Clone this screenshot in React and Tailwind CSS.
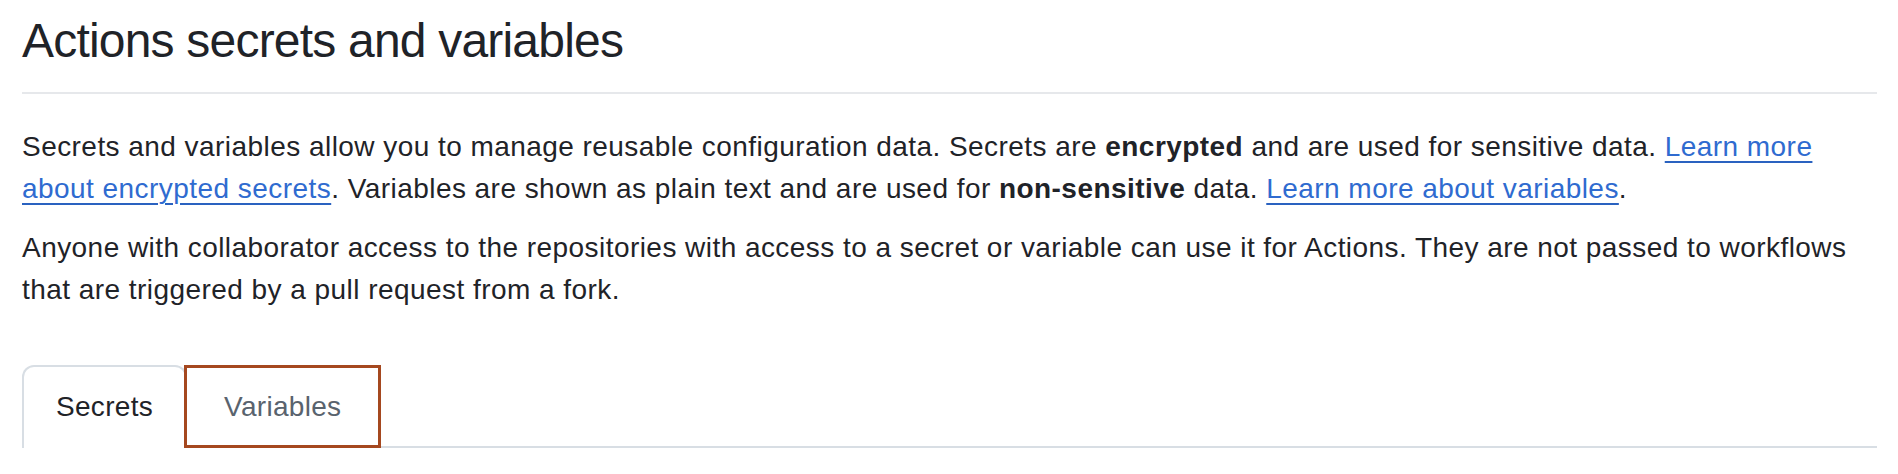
export default function App() {
  return (
    <div
      className="min-h-[474px] bg-white text-[#1f2328] pl-[22px] pr-[21px]"
      style={{ fontFamily: '"Liberation Sans", Arial, sans-serif' }}
    >
      <div className="pt-[5px] pb-[15px] border-b-2 border-[#e6e8eb]">
        <h2 className="text-[48px] leading-[72px] font-normal tracking-[-0.8px]">Actions secrets and variables</h2>
      </div>

      <div className="mt-[32px] text-[28px] leading-[42px] tracking-[0.45px]">
        <p className="mb-[17px]">
          Secrets and variables allow you to manage reusable configuration data. Secrets are{' '}
          <strong className="font-bold">encrypted</strong> and are used for sensitive data.{' '}
          <a href="#" className="text-[#2f6bd0] underline decoration-2 underline-offset-[5px] decoration-[#2a62c0]">
            Learn more about encrypted secrets
          </a>
          . Variables are shown as plain text and are used for{' '}
          <strong className="font-bold">non-sensitive</strong> data.{' '}
          <a href="#" className="text-[#2f6bd0] underline decoration-2 underline-offset-[5px] decoration-[#2a62c0]">
            Learn more about variables
          </a>
          .
        </p>
        <p>
          Anyone with collaborator access to the repositories with access to a secret or variable can use it for
          Actions. They are not passed to workflows that are triggered by a pull request from a fork.
        </p>
      </div>

      <nav className="mt-[54px] flex border-b-2 border-[#d8dee4] text-[28px] leading-[42px] tracking-[0.3px]">
        <a
          href="#"
          className="-mb-[2px] px-[32px] pt-[19px] pb-[20px] border-2 border-b-0 border-[#d8dee4] rounded-t-[12px] bg-white text-[#1f2328]"
        >
          Secrets
        </a>
        <a
          href="#"
          className="-mb-[2px] -ml-[3px] px-[37px] pt-[18px] pb-[17px] border-[3px] border-[#a5481f] text-[#59636e]"
        >
          Variables
        </a>
      </nav>
    </div>
  );
}
